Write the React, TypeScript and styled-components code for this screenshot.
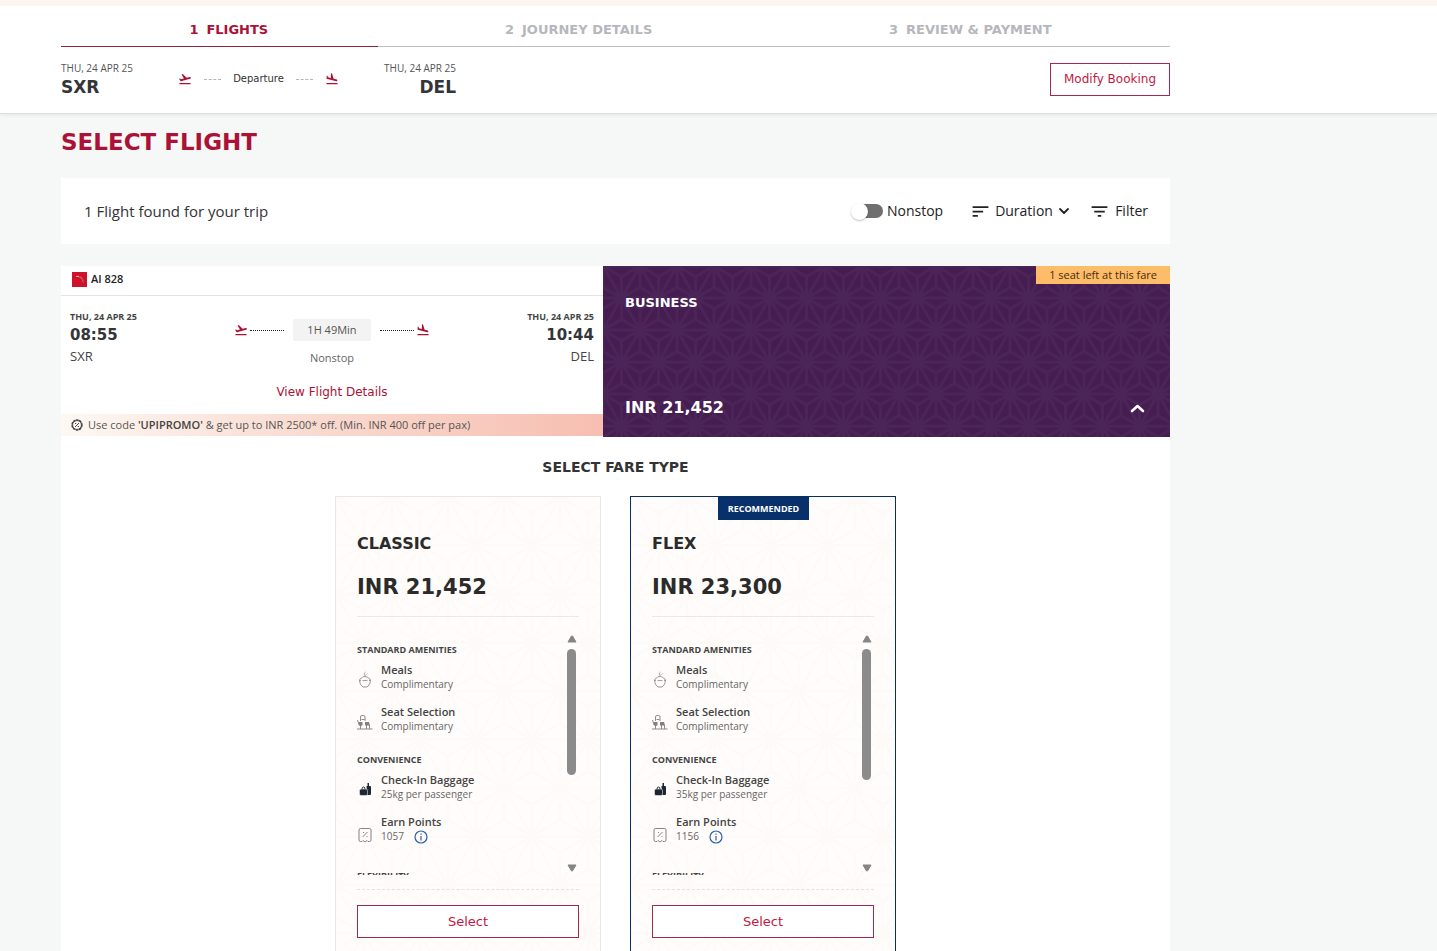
import React, { useId } from "react";
import styled, { createGlobalStyle } from "styled-components";
import { MdFlightTakeoff, MdFlightLand, MdSort, MdFilterList } from "react-icons/md";

const body = '"Open Sans", "Noto Sans", sans-serif';
const display = '"DejaVu Sans", Verdana, sans-serif';
const crimson = "#ab1236";

const GlobalStyle = createGlobalStyle`
  *, *::before, *::after { box-sizing: border-box; }
  body { margin: 0; background: #f6f8f8; color: #333; font-family: ${body}; }
  h1, h2, h3, h4, p, ul, ol { margin: 0; padding: 0; list-style: none; }
  button, select { font: inherit; color: inherit; background: none; border: 0; padding: 0; cursor: pointer; }
  a { text-decoration: none; }
`;

const Page = styled.div`
  height: 100vh;
  overflow: hidden auto;
  scrollbar-width: none;
`;

const Container = styled.div`
  max-width: 1109px;
  margin: 0 20px 0 61px;
`;

const Header = styled.header`
  height: 114px;
  background: #fff;
  border-top: 6px solid #fdf5f1;
  border-bottom: 1px solid #dbdfdf;
  box-shadow: 0 1px 4px rgba(0, 0, 0, 0.08);
`;

const Steps = styled.ol`
  position: relative;
  display: flex;
  justify-content: space-around;
  height: 41px;
  padding: 14px 0 0 10px;
  border-bottom: 1px solid #bdbfc1;
  &::after {
    content: "";
    position: absolute;
    left: 0;
    bottom: -1px;
    width: 317px;
    border-bottom: 1px solid #8e2437;
  }
`;

const Step = styled.li<{ $active?: boolean }>`
  display: flex;
  gap: 8px;
  font: bold 13px/20px ${display};
  color: ${(p) => (p.$active ? crimson : "#b6b7bd")};
`;

const TripRow = styled.div`
  display: flex;
  justify-content: space-between;
  align-items: center;
  padding-top: 13px;
`;

const Trip = styled.div`
  display: flex;
  justify-content: space-between;
  align-items: center;
  width: 395px;
`;

const TripEnd = styled.div<{ $right?: boolean }>`
  text-align: ${(p) => (p.$right ? "right" : "left")};
  font-size: 10px;
  line-height: 16px;
  color: #555;
  strong {
    display: block;
    font: bold 17px/22px ${display};
    color: #333539;
  }
`;

const TripPath = styled.div`
  display: flex;
  align-items: center;
  gap: 12px;
  font: 10px/14px ${display};
  color: #333;
  svg { color: ${crimson}; }
`;

const Dots = styled.span<{ $wide?: boolean }>`
  width: ${(p) => (p.$wide ? 34 : 17)}px;
  border-top: 1px ${(p) => (p.$wide ? "dotted #222" : "dashed #b5b5b5")};
`;

const OutlineButton = styled.button<{ $large?: boolean }>`
  height: 33px;
  padding: 0 13px;
  border: 1px solid #a3294a;
  background: #fff;
  color: #c2183f;
  font: ${(p) => (p.$large ? 13 : 12)}px/20px ${display};
`;

const Title = styled.h1`
  padding: 12px 0 20px;
  font: bold 23px/32px ${display};
  color: ${crimson};
`;

const Toolbar = styled.section`
  display: flex;
  justify-content: space-between;
  align-items: center;
  height: 66px;
  padding: 0 22px 0 23px;
  background: #fff;
  font-size: 14px;
  line-height: 20px;
`;

const ResultCount = styled.p`
  font-size: 15px;
`;

const Tools = styled.div`
  display: flex;
  align-items: center;
  color: #222;
  gap: 27px;
`;

const ToggleLabel = styled.label`
  display: flex;
  align-items: center;
  gap: 4px;
`;

const Toggle = styled.input`
  appearance: none;
  display: flex;
  align-items: center;
  width: 32px;
  height: 14px;
  margin: 0;
  background: linear-gradient(90deg, transparent 7px, #6f6f6f 7px);
  border-radius: 7px;
  &::before {
    content: "";
    width: 17px;
    height: 17px;
    flex: none;
    border-radius: 50%;
    background: #fff;
    box-shadow: 0 1px 2px rgba(0, 0, 0, 0.25);
  }
`;

const Sort = styled.label`
  display: flex;
  align-items: center;
  gap: 4px;
`;

const SortSelect = styled.select`
  appearance: none;
  width: 59px;
  line-height: 20px;
`;

const FilterButton = styled.button`
  display: flex;
  align-items: center;
  gap: 5px;
  margin-left: -8px;
`;

const Result = styled.article`
  margin-top: 22px;
  background: #fff;
`;

const ResultTop = styled.div`
  display: grid;
  grid-template-columns: 542fr 567fr;
`;

const Itinerary = styled.div`
  display: flex;
  flex-direction: column;
`;

const Carrier = styled.div`
  display: flex;
  align-items: center;
  gap: 4px;
  height: 30px;
  padding: 0 11px 3px;
  border-bottom: 1px solid #e3e3e3;
  font-size: 11px;
  line-height: 16px;
  font-weight: 600;
  color: #222;
`;

const Legs = styled.div`
  display: flex;
  justify-content: space-between;
  flex: 1;
  padding: 13px 9px 0;
`;

const Leg = styled.div<{ $right?: boolean }>`
  width: 120px;
  text-align: ${(p) => (p.$right ? "right" : "left")};
  color: #444;
  time, strong, span { display: block; }
  time { font-size: 9px; line-height: 16px; font-weight: 700; }
  strong { font: bold 15px/21px ${display}; color: #333539; }
  span { font-size: 13px; line-height: 20px; font-weight: 500; }
`;

const LegMiddle = styled.div`
  display: flex;
  flex-direction: column;
  align-items: center;
  font-size: 11px;
  line-height: 16px;
  color: #666;
`;

const LegPath = styled.div`
  display: flex;
  align-items: center;
  padding-top: 10px;
  margin-bottom: 9px;
  > svg { color: ${crimson}; margin: 0 2px; }
`;

const Duration = styled.span`
  width: 78px;
  margin: 0 9px;
  border-radius: 2px;
  background: #f3f3f3;
  text-align: center;
  line-height: 22px;
  color: #555;
`;

const DetailsLink = styled.a`
  margin-top: 18px;
  font: 12px/16px ${display};
  color: ${crimson};
`;

const Promo = styled.p`
  display: flex;
  align-items: center;
  gap: 5px;
  height: 22px;
  padding: 0 10px;
  margin-bottom: 1px;
  background: linear-gradient(90deg, #fdf8f3 0%, #f9d8cd 50%, #f7beb1 100%);
  font-size: 11px;
  line-height: 20px;
  color: #555;
  b { font-weight: 600; color: #444; }
`;

const Cabin = styled.button`
  position: relative;
  display: flex;
  flex-direction: column;
  justify-content: space-between;
  height: 171px;
  padding: 27px 22px 19px;
  background: #451d50;
  text-align: left;
  color: #fff;
`;

const CabinName = styled.span`
  position: relative;
  font: bold 13px/20px ${display};
`;

const CabinPrice = styled.span`
  position: relative;
  display: flex;
  align-items: center;
  justify-content: space-between;
  align-self: stretch;
  font: bold 16px/20px ${display};
`;

const SeatsLeft = styled.span`
  position: absolute;
  top: 0;
  right: 0;
  padding: 0 13px;
  background: #fdbc68;
  color: #4a2c10;
  font-size: 11px;
  line-height: 18px;
`;

const PatternFill = styled.svg`
  position: absolute;
  inset: 0;
  width: 100%;
  height: 100%;
`;

const Fares = styled.section`
  padding-bottom: 40px;
`;

const FaresTitle = styled.h2`
  padding: 20px 0 19px;
  text-align: center;
  font: bold 14px/20px ${display};
  color: #333;
`;

const FareList = styled.div`
  display: flex;
  justify-content: center;
  gap: 29px;
`;

const FareCard = styled.article<{ $recommended?: boolean }>`
  position: relative;
  width: 266px;
  padding: 35px 21px 28px;
  border: 1px solid ${(p) => (p.$recommended ? "#0a2f5e" : "#e9e6e5")};
  background: #fffdfc;
`;

const FareBody = styled.div`
  position: relative;
  display: flex;
  flex-direction: column;
`;

const Ribbon = styled.span`
  position: absolute;
  top: 0;
  left: 87px;
  width: 91px;
  text-align: center;
  background: #08306b;
  color: #fff;
  font-size: 9px;
  font-weight: 700;
  line-height: 23px;
`;

const FareName = styled.h3`
  font: bold 16px/24px ${display};
  color: #2b2b2b;
`;

const FarePrice = styled.p`
  padding: 15px 0 13px;
  border-bottom: 1px solid #ece8e7;
  font: bold 21px/32px ${display};
  color: #2b2b2b;
`;

const Scroller = styled.div`
  display: flex;
  justify-content: space-between;
  height: 240px;
  margin: 18px 0 14px;
  overflow: hidden;
`;

const Groups = styled.div`
  display: flex;
  flex-direction: column;
  gap: 19px;
  padding-top: 8px;
`;

const GroupTitle = styled.h4`
  margin-bottom: 5px;
  font-size: 9px;
  font-weight: 700;
  line-height: 14px;
  color: #444;
`;

const Amenities = styled.ul`
  display: flex;
  flex-direction: column;
  gap: 12px;
`;

const Amenity = styled.li<{ $info?: boolean }>`
  display: grid;
  grid-template-columns: 16px auto;
  align-items: end;
  gap: 8px;
  padding-bottom: ${(p) => (p.$info ? 6 : 0)}px;
  font-size: 11px;
  line-height: 15px;
  color: #666;
  > svg { margin-bottom: ${(p) => (p.$info ? 0 : 3)}px; }
  b { display: block; font-weight: 600; color: #444; }
`;

const AmenityNote = styled.span`
  display: flex;
  align-items: center;
  gap: 10px;
  height: 15px;
  font-size: 10px;
`;

const InfoButton = styled.button`
  display: flex;
`;

const ScrollTrack = styled.div`
  display: flex;
  flex-direction: column;
  align-items: center;
  gap: 6px;
  width: 9px;
  margin: 0 3px 3px;
`;

const ScrollThumb = styled.span<{ $size: number }>`
  width: 9px;
  height: ${(p) => p.$size}px;
  border-radius: 5px;
  background: #8b8b8b;
`;

const ScrollDown = styled.span`
  display: flex;
  margin-top: auto;
`;

const Rule = styled.hr`
  width: 100%;
  margin: 0 0 15px;
  border: 0;
  border-top: 1px dashed #e4e1e0;
`;

/* Asanoha: stars on a triangular lattice, each triangle joined at its centre. */
function Asanoha({ color, width, side }: { color: string; width: number; side: number }) {
  const id = useId();
  const s = side;
  const h = s * 0.866;
  const t = h / 3;
  const d = [
    `M0 0H${s}M0 ${h}H${s}M0 ${2 * h}H${s}`,
    `M0 0L${s} ${2 * h}M${s} 0L0 ${2 * h}`,
    `M0 0L${s / 2} ${t}L${s} 0M${s / 2} ${t}V${h}`,
    `M0 ${2 * h}L${s / 2} ${2 * h - t}L${s} ${2 * h}M${s / 2} ${2 * h - t}V${h}`,
    `M0 0V${2 * t}L${s / 2} ${h}L0 ${h + t}V${2 * h}`,
    `M${s} 0V${2 * t}L${s / 2} ${h}L${s} ${h + t}V${2 * h}`,
  ].join("");
  return (
    <PatternFill aria-hidden="true">
      <defs>
        <pattern id={id} width={s} height={2 * h} patternUnits="userSpaceOnUse">
          <path d={d} fill="none" stroke={color} strokeWidth={width} />
        </pattern>
      </defs>
      <rect width="100%" height="100%" fill={`url(#${id})`} />
    </PatternFill>
  );
}

const MealIcon = () => (
  <svg width="16" height="18" viewBox="0 0 16 18" fill="none" stroke="#8a8a8a">
    <path d="M8 5.5C5.500 5.5 5 7 2.800 8.200v3.300q.5 2.500 3.200 4.500h4q2.700-2 3.200-4.500V8.200C11 7 10.500 5.500 8 5.500z" strokeWidth=".9" />
    <path d="M2 9.500h2M12 9.500h2M5.500 9.500h5M8 5V3.500M8 3.500c-1 0-1-1.500.5-2.500M9.500 3.500l1-1" strokeWidth=".8" />
  </svg>
);

const SeatIcon = () => (
  <svg width="16" height="18" viewBox="0 0 16 18" fill="none" stroke="#808080" strokeWidth=".9">
    <path d="M3.500 8V4q0-1.500 1.500-1.500h1.500Q8 2.500 8 4v4M4.500 6.500h3" />
    <path d="M.5 7l1.500 5h3M0 16h15.500M3.500 12v4M9.500 12v4M12.500 12v4" />
    <path d="M1.500 9h4v3.500h-3zM8 9h4l1 3.500H8z" fill="#808080" stroke="none" />
  </svg>
);

const BagIcon = () => (
  <svg width="16" height="18" viewBox="0 0 16 18" fill="#1d2733">
    <path d="M9.500 5h1V2h1.500v3h1q1 0 1 1v7q0 1-1 1H10z" />
    <rect x="2.500" y="8" width="8" height="6.500" rx="1.500" stroke="#fff" strokeWidth=".5" />
    <path d="M5 8q0-2 1.500-2t1.500 2" fill="none" stroke="#1d2733" />
  </svg>
);

const PointsIcon = () => (
  <svg width="16" height="18" viewBox="0 0 16 18" fill="none" stroke="#777">
    <path d="M3.500 2.500h9q1.500 0 1.500 1.500v10q0 1.500-1.500 1.500H11l-1-1-2 1.500-2-1.500-1 1H3.500Q2 15.500 2 14V4q0-1.500 1.500-1.500z" strokeWidth=".9" />
    <path d="M5.500 11l5-5M6 6.500h1M9.500 10.500h1" strokeWidth=".9" />
  </svg>
);

const InfoIcon = () => (
  <svg width="14" height="14" viewBox="0 0 14 14" fill="none" stroke="#2d5fa5">
    <circle cx="7" cy="7" r="6" strokeWidth="1.200" />
    <path d="M7 6v4.500M7 3.500v1.200" strokeWidth="1.200" />
  </svg>
);

const Arrow = ({ down }: { down?: boolean }) => (
  <svg width="10" height="8" viewBox="0 0 10 8" fill="#858585">
    <path d={down ? "M1 1h8L5.600 6.800q-.6.800-1.200 0z" : "M1 7h8L5.600 1.200q-.6-.8-1.200 0z"} stroke="#858585" strokeLinejoin="round" />
  </svg>
);

const Chevron = ({ up }: { up?: boolean }) => (
  <svg
    width={up ? 20 : 12}
    height={up ? 16 : 8}
    viewBox={up ? "0 0 20 16" : "0 0 12 8"}
    fill="none"
    stroke="currentColor"
    strokeLinecap="round"
    strokeLinejoin="round"
  >
    {up ? <path d="M4 11l5.500-5L15 11" strokeWidth="2.600" /> : <path d="M2 2l4 4 4-4" strokeWidth="1.800" />}
  </svg>
);

const AirlineLogo = () => (
  <svg width="15" height="15" viewBox="0 0 15 15">
    <rect width="15" height="15" fill="#d0112b" />
    <path d="M4 4.500q6.500-1 7.500 6" fill="none" stroke="#f3a091" strokeWidth="1.200" />
    <path d="M7 4.300q4 1 4.500 6.200" fill="none" stroke="#8b0b20" strokeWidth=".7" />
  </svg>
);

const OfferIcon = () => (
  <svg width="12" height="12" viewBox="0 0 12 12" fill="none" stroke="#444">
    <circle cx="6" cy="6" r="5" strokeWidth="1.400" strokeDasharray="2.600 .54" />
    <circle cx="6" cy="6" r="4.400" strokeWidth=".8" />
    <path d="M4 8l4-4M4 4.500h1.200M6.800 7.500H8" />
  </svg>
);

interface Fare {
  name: string;
  price: string;
  baggage: string;
  points: string;
  thumb: number;
  recommended?: boolean;
}

const fares: Fare[] = [
  { name: "CLASSIC", price: "INR 21,452", baggage: "25kg per passenger", points: "1057", thumb: 126 },
  { name: "FLEX", price: "INR 23,300", baggage: "35kg per passenger", points: "1156", thumb: 131, recommended: true },
];

function Perk({ icon, title, note, info }: { icon: React.ReactNode; title: string; note: string; info?: boolean }) {
  return (
    <Amenity $info={info}>
      {icon}
      <div>
        <b>{title}</b>
        <AmenityNote>
          {note}
          {info && <InfoButton aria-label="About points"><InfoIcon /></InfoButton>}
        </AmenityNote>
      </div>
    </Amenity>
  );
}

function FareOption({ fare }: { fare: Fare }) {
  return (
    <FareCard $recommended={fare.recommended}>
      <Asanoha color="#fefaf8" width={3} side={56} />
      {fare.recommended && <Ribbon>RECOMMENDED</Ribbon>}
      <FareBody>
        <FareName>{fare.name}</FareName>
        <FarePrice>{fare.price}</FarePrice>
        <Scroller>
          <Groups>
            <div>
              <GroupTitle>STANDARD AMENITIES</GroupTitle>
              <Amenities>
                <Perk icon={<MealIcon />} title="Meals" note="Complimentary" />
                <Perk icon={<SeatIcon />} title="Seat Selection" note="Complimentary" />
              </Amenities>
            </div>
            <div>
              <GroupTitle>CONVENIENCE</GroupTitle>
              <Amenities>
                <Perk icon={<BagIcon />} title="Check-In Baggage" note={fare.baggage} />
                <Perk icon={<PointsIcon />} title="Earn Points" note={fare.points} info />
              </Amenities>
            </div>
            <GroupTitle>FLEXIBILITY</GroupTitle>
          </Groups>
          <ScrollTrack aria-hidden="true">
            <Arrow />
            <ScrollThumb $size={fare.thumb} />
            <ScrollDown><Arrow down /></ScrollDown>
          </ScrollTrack>
        </Scroller>
        <Rule />
        <OutlineButton $large>Select</OutlineButton>
      </FareBody>
    </FareCard>
  );
}

export default function App() {
  return (
    <Page>
      <GlobalStyle />
      <Header>
        <Container>
          <Steps>
            <Step $active><span>1</span> FLIGHTS</Step>
            <Step><span>2</span> JOURNEY DETAILS</Step>
            <Step><span>3</span> REVIEW &amp; PAYMENT</Step>
          </Steps>
          <TripRow>
            <Trip>
              <TripEnd>THU, 24 APR 25<strong>SXR</strong></TripEnd>
              <TripPath>
                <MdFlightTakeoff size={14} />
                <Dots />
                Departure
                <Dots />
                <MdFlightLand size={14} />
              </TripPath>
              <TripEnd $right>THU, 24 APR 25<strong>DEL</strong></TripEnd>
            </Trip>
            <OutlineButton>Modify Booking</OutlineButton>
          </TripRow>
        </Container>
      </Header>
      <Container as="main">
        <Title>SELECT FLIGHT</Title>
        <Toolbar>
          <ResultCount>1 Flight found for your trip</ResultCount>
          <Tools>
            <ToggleLabel><Toggle type="checkbox" role="switch" />Nonstop</ToggleLabel>
            <Sort>
              <MdSort size={21} />
              <SortSelect aria-label="Sort by">
                <option>Duration</option>
                <option>Price</option>
              </SortSelect>
              <Chevron />
            </Sort>
            <FilterButton><MdFilterList size={21} />Filter</FilterButton>
          </Tools>
        </Toolbar>
        <Result>
          <ResultTop>
            <Itinerary>
              <Carrier><AirlineLogo />AI 828</Carrier>
              <Legs>
                <Leg><time>THU, 24 APR 25</time><strong>08:55</strong><span>SXR</span></Leg>
                <LegMiddle>
                  <LegPath>
                    <MdFlightTakeoff size={14} />
                    <Dots $wide />
                    <Duration>1H 49Min</Duration>
                    <Dots $wide />
                    <MdFlightLand size={14} />
                  </LegPath>
                  Nonstop
                  <DetailsLink href="#details">View Flight Details</DetailsLink>
                </LegMiddle>
                <Leg $right><time>THU, 24 APR 25</time><strong>10:44</strong><span>DEL</span></Leg>
              </Legs>
              <Promo>
                <OfferIcon />
                <span>Use code <b>'UPIPROMO'</b> &amp; get up to INR 2500* off. (Min. INR 400 off per pax)</span>
              </Promo>
            </Itinerary>
            <Cabin aria-expanded="true">
              <Asanoha color="#4b2458" width={3} side={37} />
              <SeatsLeft>1 seat left at this fare</SeatsLeft>
              <CabinName>BUSINESS</CabinName>
              <CabinPrice>INR 21,452<Chevron up /></CabinPrice>
            </Cabin>
          </ResultTop>
          <Fares>
            <FaresTitle>SELECT FARE TYPE</FaresTitle>
            <FareList>
              {fares.map((fare) => <FareOption key={fare.name} fare={fare} />)}
            </FareList>
          </Fares>
        </Result>
      </Container>
    </Page>
  );
}
